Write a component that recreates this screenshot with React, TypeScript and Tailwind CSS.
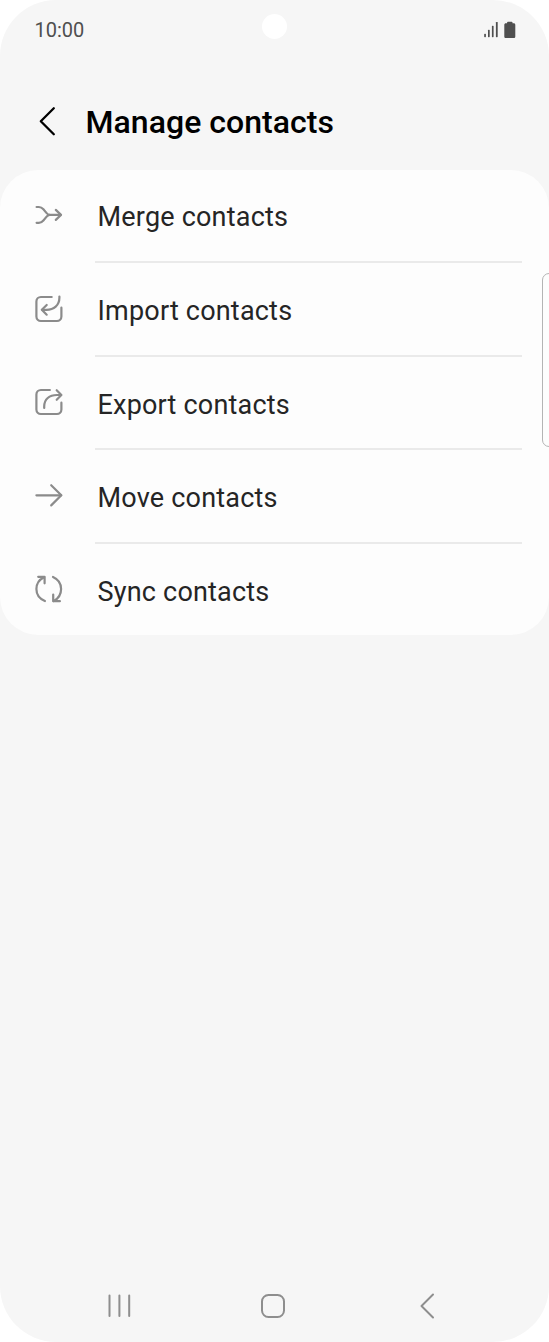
import React from 'react';

type IconProps = { children: React.ReactNode };

function RowIcon({ children }: IconProps) {
  return (
    <svg
      className="h-8 w-8 shrink-0 text-[#8b8b8b]"
      viewBox="0.6 0 32 32"
      fill="none"
      stroke="currentColor"
      strokeWidth="2.2"
      strokeLinecap="round"
      strokeLinejoin="round"
    >
      {children}
    </svg>
  );
}

const items = [
  {
    label: 'Merge contacts',
    icon: (
      <>
        <path d="M4.2 8h2.3c2 0 3.2.8 4.5 2.3l3 3.600c.9 1.100 1.700 2 3.200 2h11" />
        <path d="M4.200 23.800h2.300c2 0 3.200-.8 4.500-2.300l3-3.600c.9-1.100 1.700-2 3.200-2" />
        <path d="M23.400 10.900l5.200 5-5.200 5" />
      </>
    ),
  },
  {
    label: 'Import contacts',
    icon: (
      <>
        <path d="M19.300 4H8.500A4.500 4.500 0 0 0 4 8.500v15A4.500 4.500 0 0 0 8.500 28h16a4.500 4.500 0 0 0 4.500-4.500v-8.800" />
        <path d="M27 3.500v1.300c0 7.500-5.500 12-13 12H9.800" />
        <path d="M14.300 12l-4.900 4.800 4.900 4.900" />
      </>
    ),
  },
  {
    label: 'Export contacts',
    icon: (
      <>
        <path d="M17.500 4h-9A4.500 4.500 0 0 0 4 8.500v15A4.500 4.500 0 0 0 8.500 28h16a4.500 4.500 0 0 0 4.500-4.500v-6.800" />
        <path d="M11.800 22v-1.500c0-7.300 5.200-11.500 12.700-11.500h4" />
        <path d="M24.300 4.200L29 9l-4.700 4.800" />
      </>
    ),
  },
  {
    label: 'Move contacts',
    icon: (
      <>
        <path d="M4 15.300h24.800" />
        <path d="M18.800 5.200l10.100 10.100-10.100 10.100" />
      </>
    ),
  },
  {
    label: 'Sync contacts',
    icon: (
      <>
        <path d="M12.500 28C7 25.700 4 21 4 16S6.500 6.700 11.700 4.200" />
        <path d="M5.800 3.800h6.400v6.500" />
        <path d="M20.600 4c5.200 2.300 8.100 7 8.100 12s-2.600 9.500-7.400 12" />
        <path d="M27.500 28.200h-6.700v-6.600" />
      </>
    ),
  },
];

function StatusBar() {
  return (
    <div className="relative flex h-[60px] items-center justify-between pr-[32px] pl-[34.500px] text-[#4f4f4f]">
      <span className="-mt-px text-[20px] leading-6">10:00</span>
      <div className="absolute top-[14px] left-[261.500px] h-[25px] w-[25px] rounded-full bg-white" />
      <svg className="-mt-px h-[18px] w-[34px]" viewBox="0 0.500 34 18" fill="currentColor">
        <rect x="1.200" y="13.300" width="1.700" height="3.400" rx=".6" />
        <rect x="5" y="9.300" width="1.700" height="7.400" rx=".6" />
        <rect x="8.900" y="5.300" width="1.700" height="11.400" rx=".6" />
        <rect x="12.900" y="1.500" width="1.800" height="15.200" rx=".6" />
        <path d="M25 1.200h3.600c.6 0 .9.300.9.900v.7h1.200c1 0 1.600.6 1.600 1.600v11.500c0 1-.6 1.600-1.600 1.600h-7.800c-1 0-1.600-.6-1.600-1.600V4.400c0-1 .6-1.600 1.600-1.600h1.200v-.7c0-.6.300-.9.900-.9z" />
      </svg>
    </div>
  );
}

function App() {
  return (
    <div className="bg-white font-['Roboto',sans-serif]">
      <div className="relative flex h-[1342px] w-[549px] flex-col overflow-hidden rounded-[56px] bg-[#f6f6f6]">
        <StatusBar />

        {/* Header */}
        <header className="flex h-[110px] items-center pl-[34px]">
          <svg
            className="mt-[13px] h-8 w-8"
            viewBox="0 0 32 32"
            fill="none"
            stroke="black"
            strokeWidth="2.300"
            strokeLinecap="round"
            strokeLinejoin="round"
          >
            <path d="M19.800 2.200l-13 13 13 13" />
          </svg>
          <h1 className="mt-[14px] ml-[19.500px] text-[32px] leading-10 font-medium tracking-[0.040px] text-black">
            Manage contacts
          </h1>
        </header>

        {/* Actions */}
        <main className="h-[464.500px] rounded-[38px] bg-[#fdfdfd]">
          <ul className="-mt-[0.600px] flex flex-col">
            {items.map((item, index) => (
              <li key={item.label} className="flex h-[93.600px] pr-[27.500px] pl-[32.500px]">
                <div className="pt-[29.600px]">
                  <RowIcon>{item.icon}</RowIcon>
                </div>
                <div
                  className={`ml-[30px] flex-1 pt-[30px] pl-[3px] ${
                    index < items.length - 1 ? 'border-b-2 border-[#eaeaea]' : ''
                  }`}
                >
                  <span className="block text-[27px] leading-9 tracking-[0.200px] text-[#252525]">{item.label}</span>
                </div>
              </li>
            ))}
          </ul>
        </main>

        {/* Edge panel handle */}
        <div className="absolute top-[273px] left-[542px] h-[174px] w-[20px] rounded-[7px] border-[1.500px] border-[#b4b4b4] bg-[#fdfdfd]" />

        {/* Navigation bar */}
        <nav className="mt-auto h-[72px] text-[#8e8e8e]">
          <svg className="h-[72px] w-full" viewBox="0 0 549 72" fill="none" stroke="currentColor" strokeWidth="2" strokeLinecap="round">
            <path d="M109.500 25.500v20.500M119.400 25.500v20.500M129.200 25.500v20.500" />
            <rect x="262" y="25" width="22" height="22" rx="6.500" />
            <path d="M433 24.500L421.500 36 433 47.500" strokeLinejoin="round" />
          </svg>
        </nav>
      </div>
    </div>
  );
}

export default App;
